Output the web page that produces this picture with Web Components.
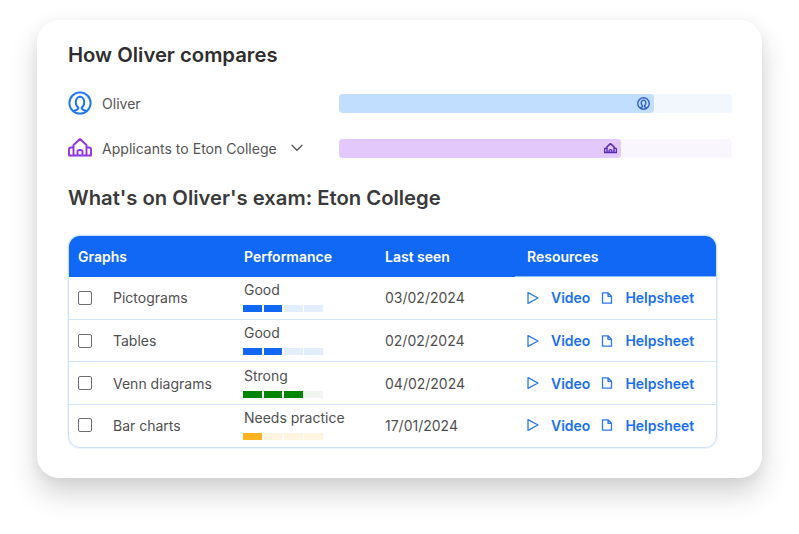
<!DOCTYPE html>
<html lang="en">
<head>
<meta charset="utf-8">
<title>How Oliver compares</title>
<style>
html, body {margin: 0; padding: 0; background: #fff; height: 534px; overflow: hidden;}
body {font-family: Inter, "Liberation Sans", sans-serif; color: #3d3d3d; display: flow-root;}
</style>
</head>
<body>
<compare-card>
  <span slot="first-title">How Oliver compares</span>
  <span slot="second-title">What's on Oliver's exam: Eton College</span>
  <compare-row slot="rows" label="Oliver" kind="person" value="315"></compare-row>
  <compare-row slot="rows" label="Applicants to Eton College" kind="school" value="282" dropdown></compare-row>
  <exam-table slot="table">
    <exam-row name="Pictograms" level="Good" score="2" tone="blue" seen="03/02/2024"></exam-row>
    <exam-row name="Tables" level="Good" score="2" tone="blue" seen="02/02/2024"></exam-row>
    <exam-row name="Venn diagrams" level="Strong" score="3" tone="green" seen="04/02/2024"></exam-row>
    <exam-row name="Bar charts" level="Needs practice" score="1" tone="amber" seen="17/01/2024"></exam-row>
  </exam-table>
</compare-card>

<script>
// Shared icons:
const icons = {
  person: `<circle cx="12" cy="12" r="10.6"/><path d="M6.500 19.600c2.800-.5 3.900-1.500 3.900-3-1.600-1-2.600-3-2.600-5.300 0-3.100 1.700-5.500 4.200-5.500s4.200 2.400 4.200 5.500c0 2.300-1 4.300-2.600 5.300 0 1.500 1.100 2.500 3.900 3"/>`,
  school: `<path d="M1 19.500H23M1 19.500v-6q0-2 2-2h2.500M23 19.500v-6q0-2-2-2h-2.500M5.500 19.500V9L12 3l6.500 6v10.500M9.500 19.500v-4q0-1.500 2.500-1.500t2.500 1.500v4"/>`
};

class CompareCard extends HTMLElement {
  connectedCallback() {
    const shadowRoot = this.attachShadow({mode: 'open'});
    shadowRoot.innerHTML = `
      <style>
      :host {
        display: block; box-sizing: border-box; width: 725px; height: 458px; margin: 20px 0 0 37px;
        padding: 23px 30px 0 31px; background: #fff; border-radius: 22px;
        box-shadow: 0 16px 28px rgba(0,0,0,.17), 0 2px 14px rgba(0,0,0,.05);
      }
      h2 {margin: 0; font-size: 20.250px; line-height: 24px; font-weight: 600; color: #2e2e2e;}
      .rows {display: flex; flex-direction: column; gap: 26px; margin-top: 24px;}
      .second {margin-top: 31px; color: #3a3a3a;}
      .table {margin: 25px 15px 0 0;}
      </style>
      <h2><slot name="first-title"></slot></h2>
      <div class="rows"><slot name="rows"></slot></div>
      <h2 class="second"><slot name="second-title"></slot></h2>
      <div class="table"><slot name="table"></slot></div>
    `;
  }
}

class CompareRow extends HTMLElement {
  connectedCallback() {
    const shadowRoot = this.attachShadow({mode: 'open'});
    const school = this.getAttribute("kind") === "school";
    const chevron = this.hasAttribute("dropdown")
      ? `<svg class="chev" viewBox="0 0 12 8"><path d="M1 1.200l5 5 5-5"/></svg>` : "";
    shadowRoot.innerHTML = `
      <style>
      :host {
        display: grid; grid-template-columns: 271px 393px; align-items: center; height: 19px;
        --main: ${school ? "#9234e6" : "#1a75f5"};
        --icon-small: ${school ? "#5a2bb5" : "#2f5fc8"};
        --fill: ${school ? "#e2c8fb" : "#c1ddff"};
        --rest: ${school ? "#f9f6fe" : "#f2f6fd"};
      }
      .who {display: flex; align-items: center; font-size: 14.060px; color: #555;}
      .big {width: 24px; height: 24px; margin-right: 10px; flex: none;}
      svg {fill: none; stroke-linecap: round; stroke-linejoin: round;}
      .big {stroke: var(--main); stroke-width: 1.900;}
      .chev {width: 12px; height: 8px; margin-left: 14px; stroke: #555; stroke-width: 1.300;}
      .bar {height: 19px; background: var(--rest); border-radius: 4px; display: flex;}
      .fill {
        width: ${this.getAttribute("value")}px; background: var(--fill); border-radius: 4px;
        display: flex; align-items: center; justify-content: flex-end; padding-right: 4px; box-sizing: border-box;
      }
      .small {width: 13px; height: 13px; stroke: var(--icon-small); stroke-width: 2.600;}
      </style>
      <div class="who">
        <svg class="big" viewBox="0 0 24 24">${icons[this.getAttribute("kind")]}</svg>
        <span>${this.getAttribute("label")}</span>${chevron}
      </div>
      <div class="bar"><div class="fill"><svg class="small" viewBox="0 0 24 24">${icons[this.getAttribute("kind")]}</svg></div></div>
    `;
  }
}

class ExamTable extends HTMLElement {
  connectedCallback() {
    const shadowRoot = this.attachShadow({mode: 'open'});
    shadowRoot.innerHTML = `
      <style>
      :host {
        display: block; box-sizing: border-box; height: 213px; background: #fff;
        border: 1px solid #cfe2fb; border-radius: 12px; overflow: hidden;
        box-shadow: 0 0 0 1px #eef5fe;
      }
      .head {
        display: grid; grid-template-columns: 175px 141px 142px 1fr; align-items: center;
        height: 41px; color: #fff; font-size: 14px; font-weight: 600;
        background:
          linear-gradient(90deg, #1068f5 446px, #8fbbf9 446px) bottom / 100% 1px no-repeat,
          #1068f5;
      }
      .head span:first-child {padding-left: 9px;}
      </style>
      <div class="head"><span>Graphs</span><span>Performance</span><span>Last seen</span><span>Resources</span></div>
      <slot></slot>
    `;
  }
}

class ExamRow extends HTMLElement {
  connectedCallback() {
    const shadowRoot = this.attachShadow({mode: 'open'});
    const score = Number(this.getAttribute("score"));
    const tone = {
      blue: ["#1068f5", "#e2eefd"],
      green: ["#048604", "#f1f6f1"],
      amber: ["#ffb21f", "#fff4e0"]
    }[this.getAttribute("tone")];
    const segments = [0, 1, 2, 3]
      .map(i => `<i style="background:${i < score ? tone[0] : tone[1]}"></i>`).join("");
    shadowRoot.innerHTML = `
      <style>
      :host {
        display: grid; grid-template-columns: 175px 141px 142px 1fr; align-items: center;
        box-sizing: border-box; height: 42.700px; border-bottom: 1px solid #d3e5fb;
        font-size: 14px; color: #4f4f4f;
      }
      :host(:last-child) {border-bottom: 0; padding-bottom: 2px;}
      .name {display: flex; align-items: center; padding-left: 9px;}
      .box {
        box-sizing: border-box; width: 14px; height: 14px; margin-right: 21px; border: 1px solid #6e6e6e;
        border-radius: 2px; flex: none;
      }
      .perf {display: flex; flex-direction: column; gap: 7px; margin-top: -2px;}
      .perf span {line-height: 17px;}
      .meter {display: flex; gap: 1.600px; margin-left: -.7px;}
      .meter i {width: 18.700px; height: 7px; display: block;}
      .res {display: flex; align-items: center; color: #1a6ff0; font-weight: 600;}
      svg {fill: none; stroke: #2b78f0; stroke-width: 1.300; stroke-linejoin: round; stroke-linecap: round; flex: none;}
      .play {width: 12px; height: 12px; margin-right: 12px;}
      .doc {width: 12px; height: 12px; margin: 0 12px 0 11px;}
      </style>
      <div class="name"><div class="box"></div><span>${this.getAttribute("name")}</span></div>
      <div class="perf"><span>${this.getAttribute("level")}</span><div class="meter">${segments}</div></div>
      <div>${this.getAttribute("seen")}</div>
      <div class="res">
        <svg class="play" viewBox="0 0 12 12"><path d="M1 .6l10 5.400-10 5.400z"/></svg><span>Video</span>
        <svg class="doc" viewBox="0 0 12 12"><path d="M1.500 .8h5.500l3.500 3.500V11.200h-9zM7 .8v3.500h3.500"/></svg><span>Helpsheet</span>
      </div>
    `;
  }
}

// Register the custom elements:
customElements.define("compare-card", CompareCard);
customElements.define("compare-row", CompareRow);
customElements.define("exam-table", ExamTable);
customElements.define("exam-row", ExamRow);
</script>
</body>
</html>
